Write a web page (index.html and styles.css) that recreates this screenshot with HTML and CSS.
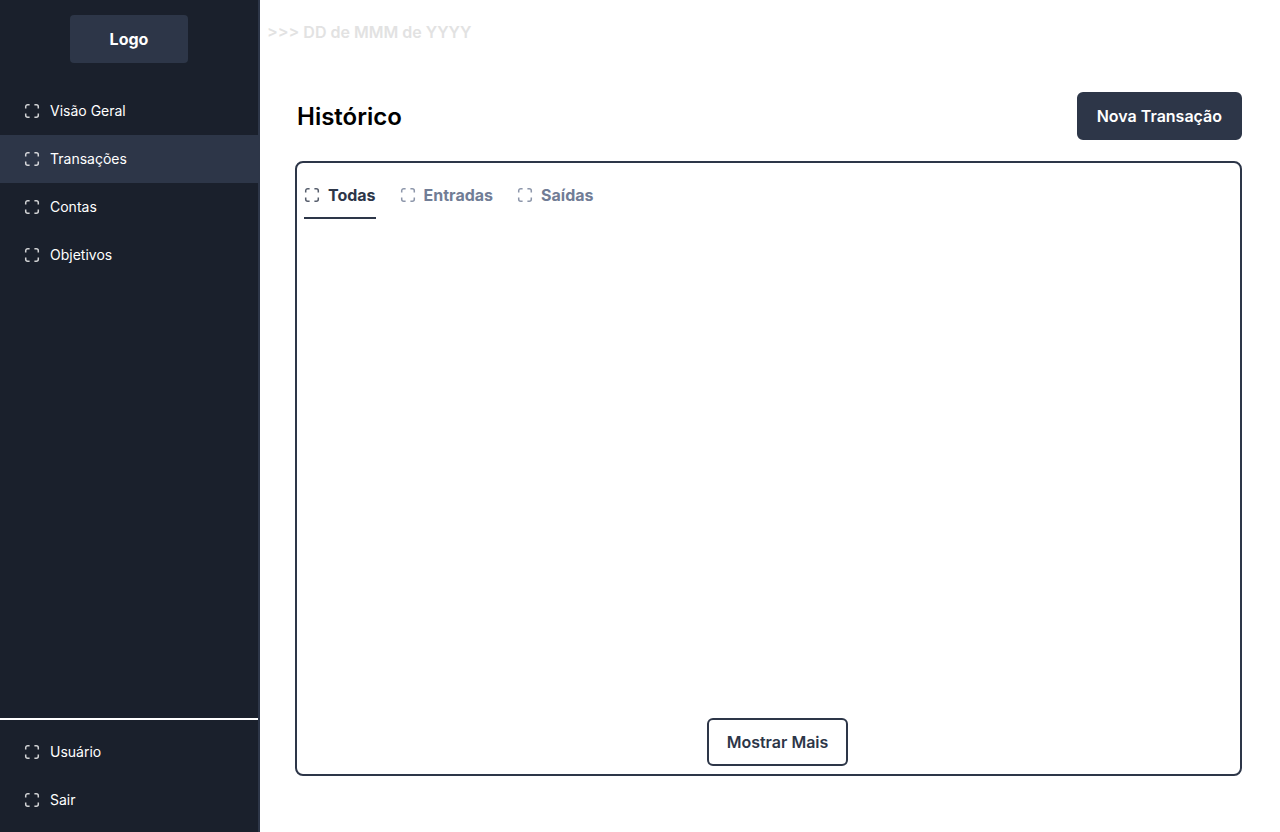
FILE: index.html
```html
<!DOCTYPE html>
<html lang="pt-BR">
<head>
<meta charset="utf-8">
<meta name="viewport" content="width=device-width, initial-scale=1">
<title>Transações</title>
<link rel="stylesheet" href="styles.css">
</head>
<body>
<svg class="sprite" aria-hidden="true">
  <symbol id="frame" viewBox="0 0 16 16">
    <path d="M5.6 1.7H3.7a2 2 0 0 0-2 2v1.9M10.4 1.7h1.9a2 2 0 0 1 2 2v1.9M14.3 10.4v1.9a2 2 0 0 1-2 2h-1.9M5.6 14.3H3.7a2 2 0 0 1-2-2v-1.9" fill="none" stroke="currentColor" stroke-width="1.5"/>
  </symbol>
</svg>
<div class="app">
  <aside class="sidebar">
    <a class="logo" href="#">Logo</a>
    <nav class="menu">
      <a class="menu-item" href="#"><svg class="icon"><use href="#frame"/></svg>Visão Geral</a>
      <a class="menu-item active" href="#" aria-current="page"><svg class="icon"><use href="#frame"/></svg>Transações</a>
      <a class="menu-item" href="#"><svg class="icon"><use href="#frame"/></svg>Contas</a>
      <a class="menu-item" href="#"><svg class="icon"><use href="#frame"/></svg>Objetivos</a>
    </nav>
    <nav class="menu account">
      <a class="menu-item" href="#"><svg class="icon"><use href="#frame"/></svg>Usuário</a>
      <a class="menu-item" href="#"><svg class="icon"><use href="#frame"/></svg>Sair</a>
    </nav>
  </aside>
  <main class="main">
    <p class="date">&gt;&gt;&gt; DD de MMM de YYYY</p>
    <header class="heading">
      <h1 class="title">Histórico</h1>
      <button class="button primary" type="button">Nova Transação</button>
    </header>
    <section class="panel">
      <div class="tabs" role="tablist">
        <button class="tab selected" type="button" role="tab" aria-selected="true"><svg class="icon"><use href="#frame"/></svg>Todas</button>
        <button class="tab" type="button" role="tab" aria-selected="false"><svg class="icon"><use href="#frame"/></svg>Entradas</button>
        <button class="tab" type="button" role="tab" aria-selected="false"><svg class="icon"><use href="#frame"/></svg>Saídas</button>
      </div>
      <div class="more">
        <button class="button outline" type="button">Mostrar Mais</button>
      </div>
    </section>
  </main>
</div>
</body>
</html>
```
FILE: styles.css
```css
* {
  box-sizing: border-box;
}

body {
  margin: 0;
  background: #fff;
  color: #000;
  font-family: Inter, "Liberation Sans", sans-serif;
  font-size: 16px;
  line-height: 24px;
}

.sprite {
  display: none;
}

.app {
  display: flex;
  min-height: 100vh;
}

.sidebar {
  display: flex;
  flex-direction: column;
  flex: 0 0 260px;
  padding-top: 15px;
  border-right: 2px solid #2d3648;
  background: #1a202c;
}

.logo {
  align-self: center;
  margin-bottom: 24px;
  padding: 12px 40px;
  border-radius: 4px;
  background: #2d3648;
  color: #fff;
  font-weight: 700;
  text-decoration: none;
}

.menu-item {
  display: flex;
  align-items: center;
  gap: 10px;
  height: 48px;
  padding: 0 24px;
  color: #fff;
  font-size: 14px;
  text-decoration: none;
}

.menu-item.active {
  background: #2d3648;
}

.account {
  margin-top: auto;
  padding: 8px 0;
  border-top: 2px solid #fff;
}

.icon {
  flex: none;
  width: 16px;
  height: 16px;
  opacity: 0.8;
}

.main {
  display: flex;
  flex: 1;
  flex-direction: column;
  padding: 20px 38px 56px 35px;
}

.date {
  margin: 0 0 48px -28px;
  color: #e2e2e2;
  font-weight: 600;
}

.heading {
  display: flex;
  align-items: center;
  justify-content: space-between;
  margin-bottom: 21px;
  padding-left: 2px;
}

.title {
  margin: 0;
  padding-top: 2px;
  font-size: 24px;
  font-weight: 600;
  line-height: 32px;
}

.button {
  height: 48px;
  border: 2px solid #2d3648;
  border-radius: 6px;
  padding: 0 18px;
  font: inherit;
  font-weight: 600;
}

.primary {
  background: #2d3648;
  color: #fff;
}

.outline {
  background: #fff;
  color: #2d3648;
}

.panel {
  display: flex;
  flex: 1;
  flex-direction: column;
  justify-content: space-between;
  padding: 8px 7px;
  border: 2px solid #2d3648;
  border-radius: 8px;
}

.tabs {
  display: flex;
  gap: 24px;
}

.tab {
  display: flex;
  align-items: center;
  gap: 8px;
  height: 48px;
  padding: 2px 0 0;
  border: 0;
  border-bottom: 2px solid transparent;
  background: none;
  color: #717d96;
  font: inherit;
  font-weight: 700;
}

.tab.selected {
  border-color: #2d3648;
  color: #2d3648;
}

.more {
  display: flex;
  justify-content: center;
  padding-left: 18px;
}
```
